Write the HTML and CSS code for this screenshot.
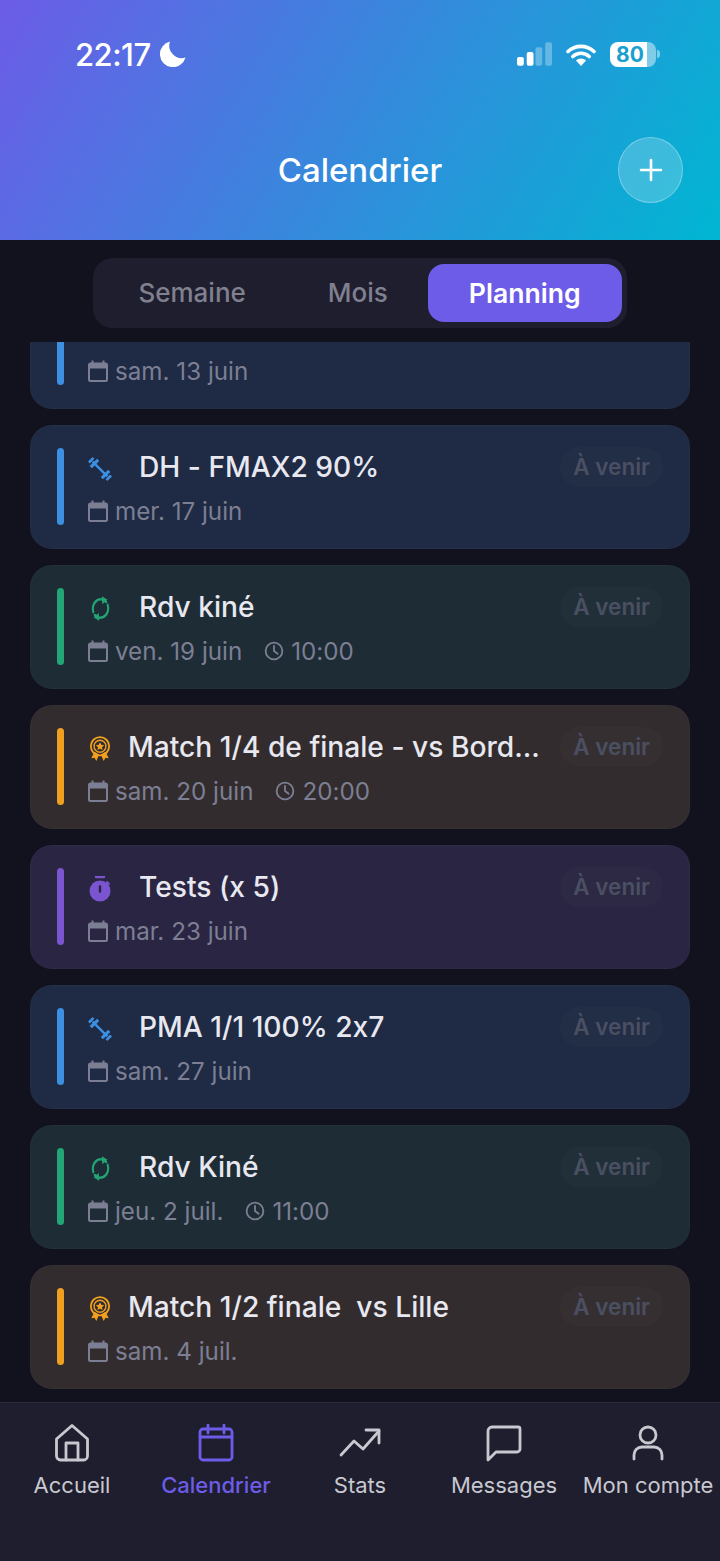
FILE: index.html
```html
<!DOCTYPE html>
<html lang="fr">

<head>
	<meta charset="utf-8" />
	<meta name="viewport" content="width=device-width, initial-scale=1" />
	<title>Calendrier</title>
	<link rel="stylesheet" href="styles.css">
</head>

<body>
	<svg class="defs" width="0" height="0">
		<symbol id="i-cal" viewBox="0 0 20 22">
			<path d="M4.500 0.500v4M15.500 0.500v4" stroke="currentColor" stroke-width="2" />
			<path d="M1 3.500h18v5H1z" fill="currentColor" />
			<rect x="1" y="3.500" width="18" height="17.500" rx="1.500" fill="none" stroke="currentColor" stroke-width="2" />
		</symbol>
		<symbol id="i-clock" viewBox="0 0 22 22">
			<circle cx="11" cy="11" r="9.200" fill="none" stroke="currentColor" stroke-width="2" />
			<path d="M11 5.500V11l4 3" fill="none" stroke="currentColor" stroke-width="2" stroke-linecap="round" stroke-linejoin="round" />
		</symbol>
		<symbol id="i-bar" viewBox="0 0 26 26">
			<g stroke="currentColor" fill="none">
				<path d="M5 5l16 16" stroke-width="2.600" />
				<path d="M3 11l8-8M15 23l8-8" stroke-width="3.400" />
				<path d="M1 6l5-5M20 25l5-5" stroke-width="2.800" />
			</g>
		</symbol>
		<symbol id="i-sync" viewBox="0 0 24 24" preserveAspectRatio="none">
			<g fill="none" stroke="currentColor" stroke-width="2.400" stroke-linecap="round">
				<path d="M18.500 5.800A9 9 0 0 0 3.800 15.500" />
				<path d="M5.500 18.200A9 9 0 0 0 20.200 8.500" />
			</g>
			<path d="M13.500 0.200l0.500 7.600 6-4.200zM10.500 23.800l-0.500-7.600-6 4.200z" fill="currentColor" />
		</symbol>
		<symbol id="i-medal" viewBox="0 0 24 28">
			<path d="M6 17l-3.500 7 3.500-0.500 2 3.500 3-7zM18 17l3.500 7-3.500-0.500-2 3.500-3-7z" fill="currentColor" />
			<circle cx="12" cy="11" r="10" fill="none" stroke="currentColor" stroke-width="2" />
			<circle cx="12" cy="11" r="6.500" fill="none" stroke="currentColor" stroke-width="1.500" />
			<path d="M12 6.500l1.400 2.900 3.100 0.400-2.300 2.200 0.600 3.100-2.800-1.500-2.800 1.500 0.600-3.100-2.300-2.200 3.100-0.400z" fill="currentColor" />
		</symbol>
		<symbol id="i-timer" viewBox="0 0 22 26">
			<path d="M7 1h8" stroke="currentColor" stroke-width="2.400" stroke-linecap="round" />
			<path d="M18 6l2 2" stroke="currentColor" stroke-width="2" stroke-linecap="round" />
			<circle cx="11" cy="15" r="10.500" fill="currentColor" />
			<path d="M11 10.500v5" stroke="#2a2542" stroke-width="2.400" stroke-linecap="round" />
		</symbol>
	</svg>

	<div class="app">
		<header class="top">
			<div class="status">
				<div class="status-time">
					<span>22:17</span>
					<svg class="moon" viewBox="0 0 26 26" width="26" height="26">
						<path d="M10 0.500A13 13 0 1 0 25.500 16.500 12.500 12.500 0 0 1 10 0.500z" fill="#fff" />
					</svg>
				</div>
				<div class="status-icons">
					<svg viewBox="0 0 36 24" width="35" height="24">
						<rect x="0" y="15" width="7" height="9" rx="2" fill="#fff" />
						<rect x="10" y="10" width="7" height="14" rx="2" fill="#fff" />
						<rect x="19" y="5" width="7" height="19" rx="2" fill="#fff" fill-opacity=".3" />
						<rect x="29" y="0" width="7" height="24" rx="2" fill="#fff" fill-opacity=".3" />
					</svg>
					<svg viewBox="0 0 30 23" width="30" height="23">
						<path d="M2 8.500a19 19 0 0 1 26 0M6.800 13.500a12 12 0 0 1 16.400 0" fill="none" stroke="#fff" stroke-width="3.600" stroke-linecap="round" />
						<path d="M15 23l-5-5.500a7 7 0 0 1 10 0z" fill="#fff" />
					</svg>
					<div class="battery">
						<div class="battery-body"><span>80</span></div>
						<div class="battery-tip"></div>
					</div>
				</div>
			</div>
			<div class="title-row">
				<h1>Calendrier</h1>
				<button class="add" type="button">
					<svg viewBox="0 0 24 24" width="24" height="24">
						<path d="M12 2v20M2 12h20" stroke="#fff" stroke-width="2.600" stroke-linecap="round" />
					</svg>
				</button>
			</div>
		</header>

		<div class="tabs-wrap">
			<div class="tabs">
				<div class="tab">Semaine</div>
				<div class="tab">Mois</div>
				<div class="tab active">Planning</div>
			</div>
		</div>

		<main class="list">
			<div class="list-inner">
				<div class="card blue">
					<div class="card-bar"></div>
					<div class="card-body">
						<div class="card-head"></div>
						<div class="card-meta">
							<svg class="meta-icon" width="20" height="22"><use href="#i-cal" /></svg><span>sam. 13 juin</span>
						</div>
					</div>
				</div>

				<div class="card blue">
					<div class="card-bar"></div>
					<div class="card-body">
						<div class="card-head">
							<span class="card-icon"><svg width="26" height="26"><use href="#i-bar" /></svg></span>
							<span class="card-title">DH - FMAX2 90%</span>
							<span class="badge">À venir</span>
						</div>
						<div class="card-meta">
							<svg class="meta-icon" width="20" height="22"><use href="#i-cal" /></svg><span>mer. 17 juin</span>
						</div>
					</div>
				</div>

				<div class="card green">
					<div class="card-bar"></div>
					<div class="card-body">
						<div class="card-head">
							<span class="card-icon"><svg width="21" height="25"><use href="#i-sync" /></svg></span>
							<span class="card-title">Rdv kiné</span>
							<span class="badge">À venir</span>
						</div>
						<div class="card-meta">
							<svg class="meta-icon" width="20" height="22"><use href="#i-cal" /></svg><span>ven. 19 juin</span>
							<svg class="meta-icon clock" width="20" height="20"><use href="#i-clock" /></svg><span>10:00</span>
						</div>
					</div>
				</div>

				<div class="card orange">
					<div class="card-bar"></div>
					<div class="card-body">
						<div class="card-head match">
							<span class="card-icon"><svg width="22" height="26"><use href="#i-medal" /></svg></span>
							<span class="card-title">Match 1/4 de finale - vs Bord...</span>
							<span class="badge">À venir</span>
						</div>
						<div class="card-meta">
							<svg class="meta-icon" width="20" height="22"><use href="#i-cal" /></svg><span>sam. 20 juin</span>
							<svg class="meta-icon clock" width="20" height="20"><use href="#i-clock" /></svg><span>20:00</span>
						</div>
					</div>
				</div>

				<div class="card purple">
					<div class="card-bar"></div>
					<div class="card-body">
						<div class="card-head">
							<span class="card-icon"><svg width="22" height="26"><use href="#i-timer" /></svg></span>
							<span class="card-title">Tests (x 5)</span>
							<span class="badge">À venir</span>
						</div>
						<div class="card-meta">
							<svg class="meta-icon" width="20" height="22"><use href="#i-cal" /></svg><span>mar. 23 juin</span>
						</div>
					</div>
				</div>

				<div class="card blue">
					<div class="card-bar"></div>
					<div class="card-body">
						<div class="card-head">
							<span class="card-icon"><svg width="26" height="26"><use href="#i-bar" /></svg></span>
							<span class="card-title">PMA 1/1 100% 2x7</span>
							<span class="badge">À venir</span>
						</div>
						<div class="card-meta">
							<svg class="meta-icon" width="20" height="22"><use href="#i-cal" /></svg><span>sam. 27 juin</span>
						</div>
					</div>
				</div>

				<div class="card green">
					<div class="card-bar"></div>
					<div class="card-body">
						<div class="card-head">
							<span class="card-icon"><svg width="21" height="25"><use href="#i-sync" /></svg></span>
							<span class="card-title">Rdv Kiné</span>
							<span class="badge">À venir</span>
						</div>
						<div class="card-meta">
							<svg class="meta-icon" width="20" height="22"><use href="#i-cal" /></svg><span>jeu. 2 juil.</span>
							<svg class="meta-icon clock" width="20" height="20"><use href="#i-clock" /></svg><span>11:00</span>
						</div>
					</div>
				</div>

				<div class="card orange">
					<div class="card-bar"></div>
					<div class="card-body">
						<div class="card-head match">
							<span class="card-icon"><svg width="22" height="26"><use href="#i-medal" /></svg></span>
							<span class="card-title">Match 1/2 finale&nbsp; vs Lille</span>
							<span class="badge">À venir</span>
						</div>
						<div class="card-meta">
							<svg class="meta-icon" width="20" height="22"><use href="#i-cal" /></svg><span>sam. 4 juil.</span>
						</div>
					</div>
				</div>
			</div>
		</main>

		<nav class="nav">
			<div class="nav-item">
				<svg viewBox="0 0 36 38" width="36" height="38" class="nav-icon">
					<path d="M2.500 15L18 1.500 33.500 15v17a4 4 0 0 1-4 4h-23a4 4 0 0 1-4-4z" />
					<path d="M12 36V19h12v17" />
				</svg>
				<span>Accueil</span>
			</div>
			<div class="nav-item active">
				<svg viewBox="0 0 36 38" width="36" height="38" class="nav-icon">
					<rect x="2" y="5" width="32" height="31" rx="3" />
					<path d="M2 13h32M10 1v8M26 1v8" />
				</svg>
				<span>Calendrier</span>
			</div>
			<div class="nav-item">
				<svg viewBox="0 0 42 38" width="42" height="38" class="nav-icon">
					<path d="M2 31l13-14 9 8 16-18" />
					<path d="M27 6h13v13" />
				</svg>
				<span>Stats</span>
			</div>
			<div class="nav-item">
				<svg viewBox="0 0 36 38" width="36" height="38" class="nav-icon">
					<path d="M2 36V7a4 4 0 0 1 4-4h26a2 2 0 0 1 2 2v20a3 3 0 0 1-3 3H10z" />
				</svg>
				<span>Messages</span>
			</div>
			<div class="nav-item">
				<svg viewBox="0 0 36 38" width="36" height="38" class="nav-icon">
					<circle cx="18" cy="11" r="8" />
					<path d="M4 35v-4a8 8 0 0 1 8-8h12a8 8 0 0 1 8 8v4" />
				</svg>
				<span>Mon compte</span>
			</div>
		</nav>
	</div>
</body>

</html>
```

FILE: styles.css
```css
* {
	box-sizing: border-box;
}
body {
	margin: 0;
	background-color: #12121f;
	font-family: Inter, "Noto Sans", sans-serif;
	font-feature-settings: "calt" 0;
	color: #e8e8f0;
}
.defs {
	display: block;
	height: 0;
}
.app {
	width: 720px;
	height: 1561px;
	display: flex;
	flex-direction: column;
	overflow: hidden;
}

/* header */
.top {
	height: 240px;
	flex-shrink: 0;
	background: linear-gradient(120deg, #6c5ce7, #00b6d2);
	color: #fff;
	padding-top: 36px;
}
.status {
	height: 36px;
	display: flex;
	justify-content: space-between;
	align-items: center;
	padding: 0 60px 0 75px;
}
.status-time {
	display: flex;
	align-items: center;
	gap: 9px;
	font-size: 31px;
	font-weight: 500;
	letter-spacing: -0.5px;
}
.status-icons {
	display: flex;
	align-items: center;
	gap: 14px;
}
.battery {
	display: flex;
	align-items: center;
	gap: 1px;
}
.battery-body {
	width: 46px;
	height: 25px;
	border-radius: 8px;
	background: linear-gradient(90deg, #fff 80%, rgba(255, 255, 255, 0.45) 80%);
	color: #1a9fcf;
	font-size: 21px;
	font-weight: 700;
	line-height: 25px;
	padding-left: 6px;
}
.battery-tip {
	width: 3px;
	height: 8px;
	border-radius: 0 3px 3px 0;
	background-color: rgba(255, 255, 255, 0.45);
}
.title-row {
	margin-top: 65px;
	height: 66px;
	padding-right: 37px;
	display: grid;
	grid-template-columns: 1fr auto 1fr;
	align-items: center;
}
.title-row h1 {
	grid-column: 2;
	margin: 0;
	font-size: 33px;
	font-weight: 500;
	padding-left: 37px;
}
.add {
	grid-column: 3;
	justify-self: end;
	width: 65px;
	height: 66px;
	padding: 0;
	border-radius: 50%;
	border: solid 1px rgba(255, 255, 255, 0.3);
	background-color: rgba(255, 255, 255, 0.2);
	display: flex;
	align-items: center;
	justify-content: center;
}

/* tabs */
.tabs-wrap {
	height: 102px;
	flex-shrink: 0;
	padding-top: 18px;
	display: flex;
	justify-content: center;
}
.tabs {
	height: 70px;
	padding: 6px 5px 6px 4px;
	display: flex;
	background-color: #1e1e2e;
	border-radius: 20px;
}
.tab {
	padding: 0 41px;
	font-size: 26px;
	font-weight: 500;
	line-height: 58px;
	color: #80808f;
	border-radius: 16px;
}
.tab.active {
	margin-left: -1px;
	background-color: #6c5ce7;
	color: #fff;
	font-size: 26.6px;
	font-weight: 600;
}

/* list */
.list {
	flex: 1;
	min-height: 0;
	overflow: hidden;
}
.list-inner {
	margin-top: -57px;
	padding: 0 30px;
	display: flex;
	flex-direction: column;
	gap: 16px;
}
.card {
	height: 124px;
	flex-shrink: 0;
	padding: 22px 26px 22px 26px;
	display: flex;
	gap: 24px;
	border-radius: 22px;
	border: solid 1px rgba(255, 255, 255, 0.025);
}
.card.blue {
	background-color: #1f2a44;
	--accent: #3d8fe0;
}
.card.green {
	background-color: #1e2c36;
	--accent: #23a574;
}
.card.orange {
	background-color: #332c2e;
	--accent: #f0a020;
}
.card.purple {
	background-color: #2a2542;
	--accent: #7b55cf;
}
.card-bar {
	width: 7px;
	height: 77px;
	flex-shrink: 0;
	border-radius: 4px;
	background-color: var(--accent);
}
.card-body {
	flex: 1;
	min-width: 0;
}
.card-head {
	display: flex;
	align-items: center;
	height: 38px;
}
.card-icon {
	width: 24px;
	margin-top: 3px;
	margin-right: 27px;
	flex-shrink: 0;
	display: flex;
	justify-content: center;
	color: var(--accent);
}
.card-head.match .card-icon {
	margin-right: 16px;
}
.card-title {
	flex: 1;
	min-width: 0;
	font-size: 28.2px;
	font-weight: 500;
	white-space: nowrap;
}
.badge {
	flex-shrink: 0;
	margin-left: 16px;
	padding: 0 13px;
	height: 40px;
	line-height: 40px;
	font-size: 22.500px;
	font-weight: 600;
	color: #4a4f62;
	border-radius: 20px;
	background-color: rgba(255, 255, 255, 0.015);
}
.card-meta {
	margin-top: 5px;
	display: flex;
	align-items: center;
	height: 40px;
	font-size: 24.200px;
	color: #7c7f93;
}
.meta-icon {
	margin-right: 7px;
	flex-shrink: 0;
}
.meta-icon.clock {
	margin-left: 22px;
	margin-right: 7px;
}

/* bottom nav */
.nav {
	height: 159px;
	flex-shrink: 0;
	padding-top: 21px;
	display: grid;
	grid-template-columns: repeat(5, 144px);
	align-items: start;
	background-color: #1e1e2e;
	border-top: solid 1px #2a2a3a;
}
.nav-item {
	display: flex;
	flex-direction: column;
	align-items: center;
	gap: 10px;
	font-size: 22px;
	color: #c8c8d0;
	white-space: nowrap;
}
.nav-item.active {
	color: #6c5ce7;
	font-weight: 500;
}
.nav-icon {
	fill: none;
	stroke: currentColor;
	stroke-width: 2.800;
	stroke-linecap: round;
	stroke-linejoin: round;
}
```
